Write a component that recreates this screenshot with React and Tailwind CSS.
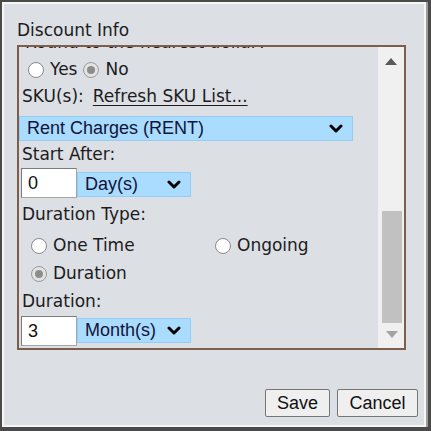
import React from "react";

const label = "font-['DejaVu_Sans',sans-serif] text-[17px] text-[#1c1c1c]";
const arial = "font-['Liberation_Sans',Arial,sans-serif]";

const Chevron = () => (
  <svg width="14" height="9" viewBox="0 0 14 9">
    <polyline points="2,2 7,7 12,2" fill="none" stroke="#000" strokeWidth="3" strokeLinecap="round" strokeLinejoin="round" />
  </svg>
);

const Radio = ({ checked }) =>
  checked ? (
    <span className="w-[16px] h-[16px] rounded-full border border-[#9a9a9a] bg-[#e3e3e3] flex items-center justify-center shrink-0">
      <span className="w-[8px] h-[8px] rounded-full bg-[#8d8d8d]" />
    </span>
  ) : (
    <span className="w-[16px] h-[16px] rounded-full border border-[#8a8a8a] bg-white shrink-0" />
  );

const Select = ({ text, w }) => (
  <div className={`${w} h-[25px] bg-[#a9dcfe] border border-[#93cdf3] flex items-center justify-between pl-[7px] pr-[9px] ${arial} text-[18px] text-[#12143a]`}>
    <span>{text}</span>
    <Chevron />
  </div>
);

const NumberInput = ({ value }) => (
  <div className={`w-[56px] h-[30px] bg-white border border-[#7b7b7b] border-b-[#a5a5a5] border-r-[#a5a5a5] flex items-center pl-[6px] ${arial} text-[18px] text-[#111]`}>
    {value}
  </div>
);

export default function App() {
  return (
    <div className="w-[431px] h-[431px] bg-[#4a4a4a] pt-[2px] pl-[2px] pr-[3px] pb-[4px]">
      <div className="h-full border-r-2 border-[#9c9c9c]">
        <div className="h-full border-2 border-[#f6f6f6] bg-[#dcdfe4] pt-[16px] pl-[13px] pr-[6px]">
          <div className={`${label} leading-[20px]`}>Discount Info</div>

          <div className="mt-[5px] w-[389px] h-[305px] border-2 border-[#7d5d4c] flex overflow-hidden">
            <div className="flex-1 flex flex-col overflow-hidden">
              {/* scrolled past, only the bottom of this line peeks out */}
              <div className={`${label} h-[26px] mt-[-18px] leading-[26px] pl-[6px] shrink-0`}>Round to the nearest dollar?</div>

              <div className={`${label} h-[26px] mt-[2px] flex items-center pl-[9px] shrink-0`}>
                <Radio />
                <span className="ml-[6px]">Yes</span>
                <span className="ml-[6px]"><Radio checked /></span>
                <span className="ml-[6px]">No</span>
              </div>

              <div className={`${label} h-[28px] flex items-center pl-[3px] shrink-0`}>
                <span>SKU(s):</span>
                <span className="ml-[9px] underline underline-offset-[3px]">Refresh SKU List...</span>
              </div>

              <div className="mt-[5px] shrink-0">
                <Select text="Rent Charges (RENT)" w="w-[334px]" />
              </div>

              <div className={`${label} h-[27px] flex items-center pl-[3px] shrink-0`}>Start After:</div>

              <div className="h-[30px] flex items-end pl-[2px] shrink-0">
                <NumberInput value="0" />
                <div className="mb-[1px]">
                  <Select text="Day(s)" w="w-[114px]" />
                </div>
              </div>

              <div className={`${label} h-[33px] flex items-center pl-[3px] shrink-0`}>Duration Type:</div>

              <div className={`${label} h-[29px] flex items-center pl-[12px] shrink-0`}>
                <div className="w-[184px] flex items-center">
                  <Radio />
                  <span className="ml-[6px]">One Time</span>
                </div>
                <Radio />
                <span className="ml-[6px]">Ongoing</span>
              </div>

              <div className={`${label} h-[28px] flex items-center pl-[12px] shrink-0`}>
                <Radio checked />
                <span className="ml-[6px]">Duration</span>
              </div>

              <div className={`${label} h-[28px] flex items-center pl-[3px] shrink-0`}>Duration:</div>

              <div className="h-[30px] flex items-end pl-[2px] shrink-0">
                <NumberInput value="3" />
                <div className="mb-[3px]">
                  <Select text="Month(s)" w="w-[114px]" />
                </div>
              </div>
            </div>

            <div className="w-[26px] bg-[#f0f0f0] flex flex-col items-center shrink-0 relative">
              <svg width="12" height="7" viewBox="0 0 12 7" className="mt-[11px]">
                <polygon points="0,7 6,0 12,7" fill="#5a5a5a" />
              </svg>
              <div className="absolute left-[4px] top-[164px] w-[20px] h-[112px] bg-[#c1c1c1]" />
              <svg width="12" height="7" viewBox="0 0 12 7" className="absolute bottom-[10px] left-[8px]">
                <polygon points="0,0 12,0 6,7" fill="#a3a3a3" />
              </svg>
            </div>
          </div>

          <div className={`mt-[39px] flex justify-end gap-[7px] ${arial} text-[18px] text-[#111]`}>
            <button className="w-[65px] h-[28px] bg-[#efefef] border border-[#767676] rounded-[2px] leading-none">Save</button>
            <button className="w-[81px] h-[28px] bg-[#efefef] border border-[#767676] rounded-[2px] leading-none">Cancel</button>
          </div>
        </div>
      </div>
    </div>
  );
}
